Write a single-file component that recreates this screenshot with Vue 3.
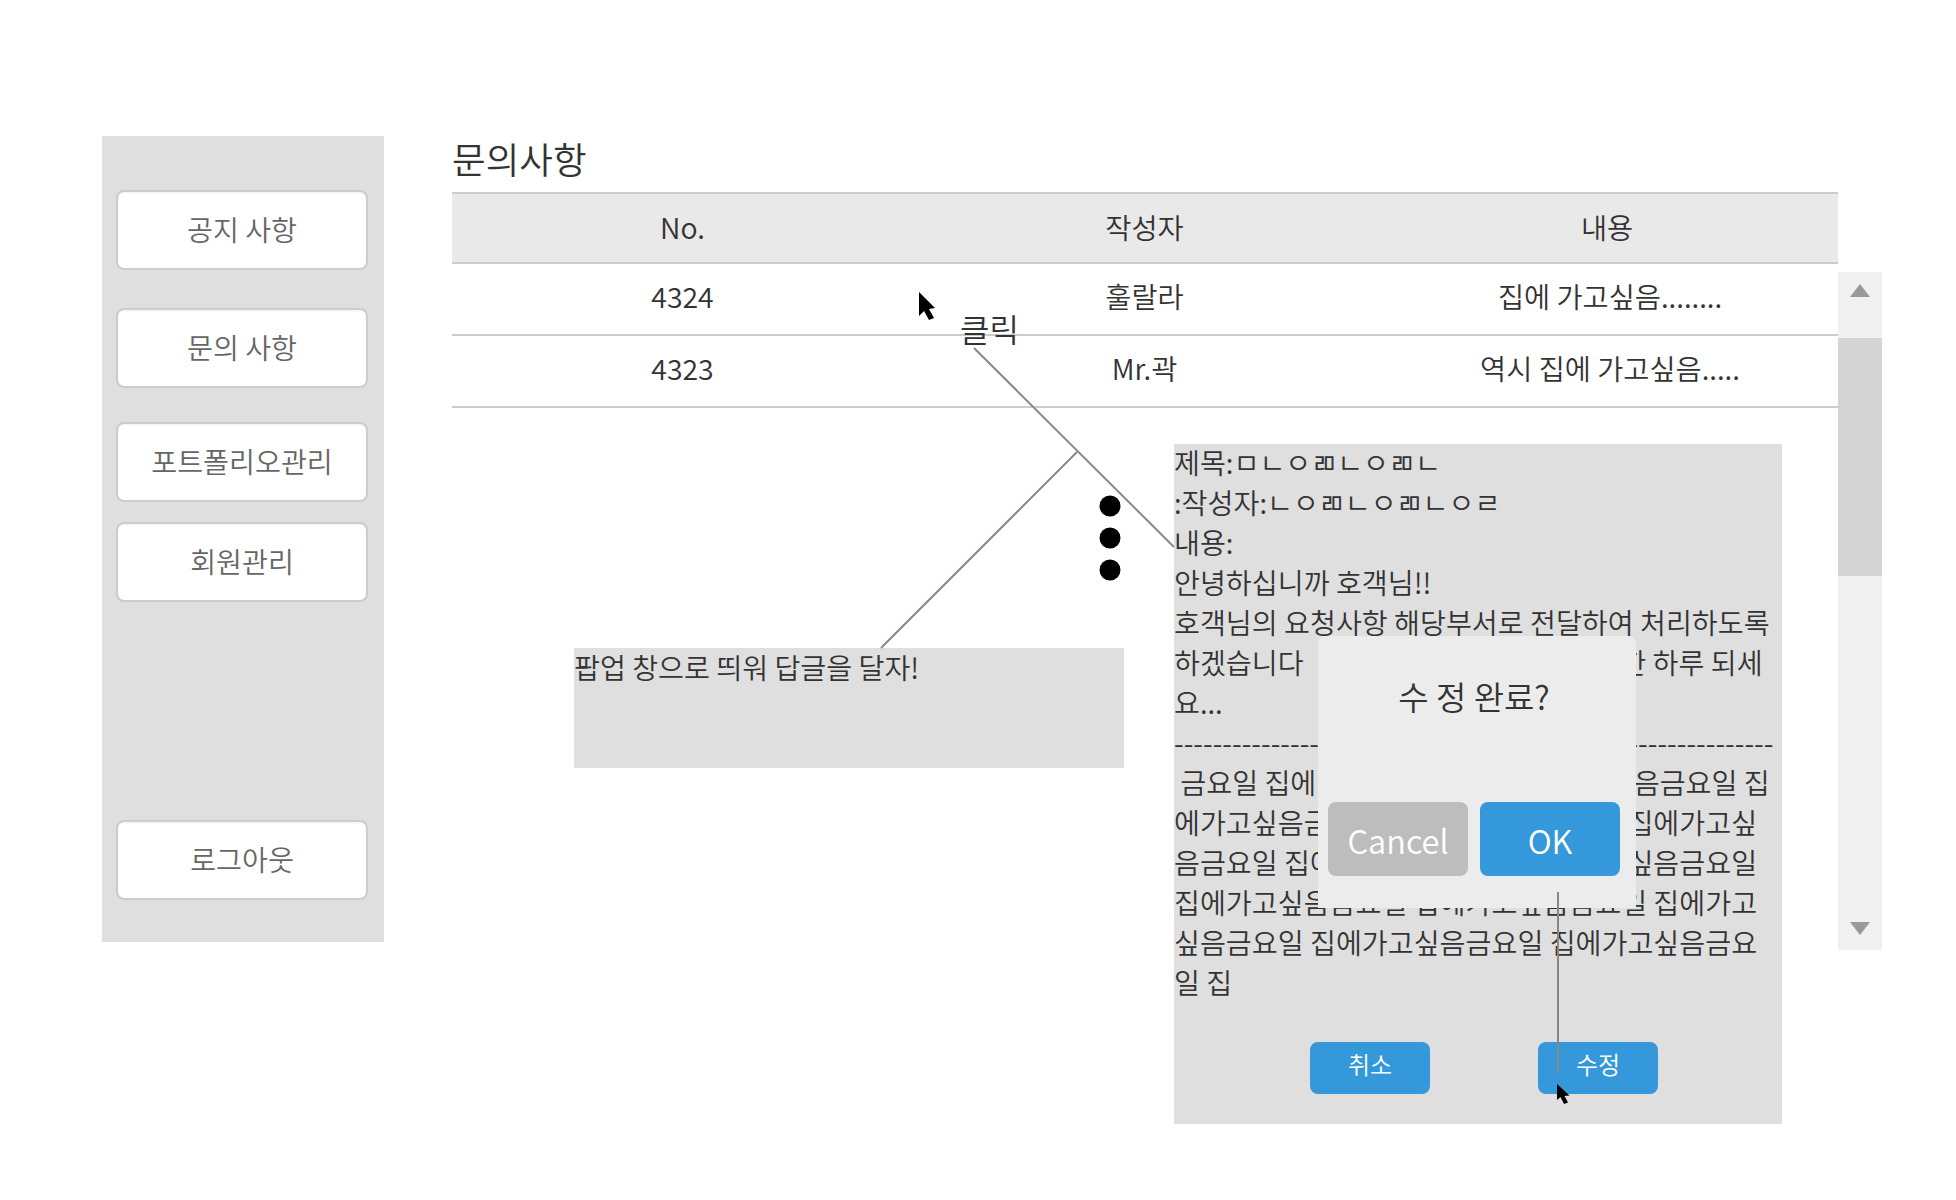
<script setup>
const menu = ['공지 사항', '문의 사항', '포트폴리오관리', '회원관리', '로그아웃']
const rows = [
  { no: '4324', author: '훌랄라', body: '집에 가고싶음........' },
  { no: '4323', author: 'Mr.곽', body: '역시 집에 가고싶음.....' }
]
const repeated = ' ' + '금요일 집에가고싶음'.repeat(12) + '금요일 집'
const dashes = '-'.repeat(62)
const notice = '호객님의 요청사항 해당부서로 전달하여 처리하도록 하겠습니다\u00a0\u00a0\u00a0오늘도 즐겁고정말로 행복한 하루 되세요...'
</script>

<template>
  <div class="page">
    <aside class="sidebar">
      <button v-for="m in menu" :key="m" class="menu-btn">{{ m }}</button>
    </aside>

    <main class="main">
      <h1 class="title">문의사항</h1>
      <div class="row head">
        <div>No.</div>
        <div>작성자</div>
        <div>내용</div>
      </div>
      <div v-for="r in rows" :key="r.no" class="row item">
        <div>{{ r.no }}</div>
        <div>{{ r.author }}</div>
        <div class="body-cell">{{ r.body }}</div>
      </div>

      <div class="notes">
        <div class="reply">팝업 창으로 띄워 답글을 달자!</div>
        <div class="detail">
          <div class="text">
            <div>제목:ㅁㄴㅇㄻㄴㅇㄻㄴ</div>
            <div>:작성자:ㄴㅇㄻㄴㅇㄻㄴㅇㄹ</div>
            <div>내용:</div>
            <div>안녕하십니까 호객님!!</div>
            <div>{{ notice }}</div>
            <div class="dash">{{ dashes }}</div>
            <div class="long">{{ repeated }}</div>
          </div>
          <div class="actions">
            <button class="small-btn">취소</button>
            <button class="small-btn">수정</button>
          </div>
          <div class="modal">
            <div class="modal-title">수 정 완료?</div>
            <div class="modal-actions">
              <button class="modal-btn cancel">Cancel</button>
              <button class="modal-btn ok">OK</button>
            </div>
          </div>
        </div>
      </div>
    </main>

    <div class="scrollbar">
      <div class="arrow-box">
        <svg width="20" height="13" viewBox="0 0 20 13"><path d="M10 0 L20 13 L0 13 Z" fill="#999" /></svg>
      </div>
      <div class="thumb"></div>
      <div class="track">
        <svg width="20" height="13" viewBox="0 0 20 13"><path d="M0 0 L20 0 L10 13 Z" fill="#999" /></svg>
      </div>
    </div>

    <svg class="overlay" width="1956" height="1200" viewBox="0 0 1956 1200">
      <g fill="none" stroke="#888" stroke-width="2">
        <path d="M974 348 L1174 547" />
        <path d="M1077 452 L881 648" />
        <path d="M1558 892 L1558 1073" />
      </g>
      <circle cx="1110" cy="506" r="10.5" fill="#000" />
      <circle cx="1110" cy="538" r="10.5" fill="#000" />
      <circle cx="1110" cy="570" r="10.5" fill="#000" />
      <path d="M919 292 L919 316 L924 311 L929 320 L934 318 L929 309 L935 308 Z" fill="#000" />
      <path d="M1557 1084 L1557 1100 L1560.5 1097 L1564 1104 L1568 1102.500 L1564.500 1096 L1569.500 1095.500 Z" fill="#000" />
    </svg>
    <div class="click-label">클릭</div>
  </div>
</template>

<style>
html, body { margin: 0; background: #fff; }
</style>

<style scoped>
.page {
  position: relative;
  width: 1956px;
  height: 1200px;
  display: flex;
  align-items: flex-start;
  overflow: hidden;
  font-family: "Noto Sans CJK KR", "Noto Sans", sans-serif;
  font-weight: 350;
  color: #333;
  background: #fff;
}
button { font-family: inherit; font-weight: inherit; cursor: default; }

.sidebar {
  box-sizing: border-box;
  width: 282px;
  height: 806px;
  margin: 136px 68px 0 102px;
  padding: 54px 14px 0;
  background: #dfdfdf;
  display: flex;
  flex-direction: column;
}
.menu-btn {
  box-sizing: border-box;
  width: 252px;
  height: 80px;
  flex: none;
  padding: 0 0 4px;
  background: #fff;
  border: 2px solid #ccc;
  border-radius: 8px;
  box-shadow: inset 0 1px 2px rgba(0, 0, 0, 0.06);
  font-size: 28.2px;
  color: #666;
}
.menu-btn:nth-child(2) { margin-top: 38px; }
.menu-btn:nth-child(3) { margin-top: 34px; }
.menu-btn:nth-child(4) { margin-top: 20px; }
.menu-btn:nth-child(5) { margin-top: 218px; }

.main {
  width: 1386px;
  flex: none;
  padding-top: 129px;
}
.title {
  margin: 0;
  font-size: 36.6px;
  font-weight: inherit;
  line-height: 59px;
  height: 63px;
}
.row {
  display: grid;
  grid-template-columns: 461px 463px 462px;
  align-items: center;
  text-align: center;
  font-size: 28.4px;
  box-sizing: border-box;
}
.head {
  height: 72px;
  background: #e9e9e9;
  border-top: 2px solid #ccc;
  border-bottom: 2px solid #ccc;
}
.head > div { margin-bottom: 4px; }
.item {
  height: 72px;
  border-bottom: 2px solid #ccc;
}
.item > div { margin-bottom: 8px; }
.body-cell { padding-left: 6px; }

.notes {
  display: flex;
  align-items: flex-start;
  padding-left: 122px;
  padding-top: 36px;
  font-size: 28.2px;
  line-height: 40px;
}
.reply {
  box-sizing: border-box;
  width: 550px;
  height: 120px;
  margin-top: 204px;
  margin-right: 50px;
  padding-bottom: 2px;
  background: #dfdfdf;
  line-height: 38px;
}
.detail {
  position: relative;
  box-sizing: border-box;
  width: 608px;
  height: 680px;
  background: #dfdfdf;
}
.text { margin-top: -2px; }
.dash { white-space: nowrap; overflow: hidden; }
.long { white-space: pre-wrap; }
.actions {
  position: absolute;
  left: 136px;
  top: 598px;
  display: flex;
  gap: 108px;
}
.small-btn {
  width: 120px;
  height: 52px;
  padding: 0 0 9px;
  border: none;
  border-radius: 8px;
  background: #3498db;
  color: #fff;
  font-size: 24px;
}
.modal {
  position: absolute;
  left: 144px;
  top: 192px;
  box-sizing: border-box;
  width: 318px;
  height: 272px;
  padding: 0 16px 32px 10px;
  background: #ececec;
  border-radius: 8px 8px 0 0;
  display: flex;
  flex-direction: column;
  justify-content: space-between;
}
.modal-title {
  margin-top: 37px;
  text-align: center;
  font-size: 33px;
  line-height: 46px;
}
.modal-actions { display: flex; gap: 12px; }
.modal-btn {
  width: 140px;
  height: 74px;
  padding: 0;
  border: none;
  border-radius: 8px;
  color: #fff;
  font-size: 32.5px;
}
.cancel { background: #bdbdbd; }
.ok { background: #3498db; }

.scrollbar {
  flex: none;
  width: 44px;
  margin-top: 272px;
  height: 678px;
  display: flex;
  flex-direction: column;
  background: #f0f0f0;
}
.arrow-box {
  height: 66px;
  box-sizing: border-box;
  padding-top: 12px;
  display: flex;
  justify-content: center;
  align-items: flex-start;
}
.arrow-box svg, .track svg { display: block; }
.thumb { height: 238px; background: #d4d4d4; }
.track {
  flex: 1;
  box-sizing: border-box;
  padding-bottom: 15px;
  display: flex;
  justify-content: center;
  align-items: flex-end;
}
.overlay {
  position: absolute;
  left: 0;
  top: 0;
  pointer-events: none;
}
.click-label {
  position: absolute;
  left: 960px;
  top: 306px;
  font-size: 32px;
  line-height: 44px;
  background: transparent;
}
</style>
